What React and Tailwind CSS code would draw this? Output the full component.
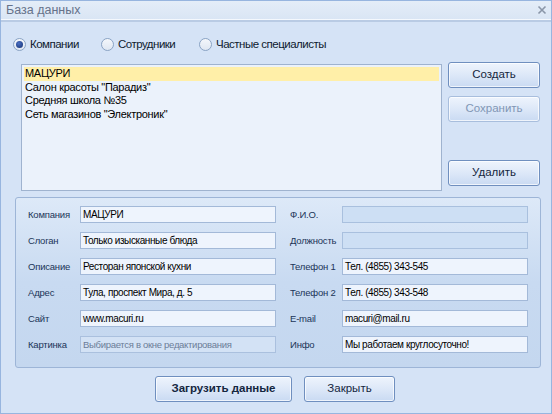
import React from "react";

const F = { fontFamily: '"Liberation Sans", Arial, sans-serif' };

function Radio({ label, checked, w }) {
  return (
    <div className="flex items-center gap-[4px]" style={{ width: w }}>
      <div className="w-[13px] h-[13px] rounded-full border border-[#8aa3c4] bg-gradient-to-b from-[#f4f7fb] to-[#dfe7f2] flex items-center justify-center">
        {checked && (
          <div className="w-[7px] h-[7px] rounded-full bg-[radial-gradient(circle_at_40%_35%,#4a6fc4,#14306f)]" />
        )}
      </div>
      <span className="text-[11.5px] tracking-[-0.5px] text-[#0e1a2e] leading-[14px]">{label}</span>
    </div>
  );
}

function Btn({ children, disabled, className = "", bold }) {
  return (
    <div
      className={`h-[26px] rounded-[3px] border flex items-center justify-center bg-gradient-to-b from-[#eef4fd] via-[#dde8f8] to-[#c9daf2] shadow-[inset_0_0_0_1px_rgba(255,255,255,0.7)] ${
        disabled ? "border-[#a8bedd] text-[#8196b5]" : "border-[#6f8fbf] text-[#142640]"
      } ${bold ? "text-[11.5px] font-bold" : "text-[11.5px]"} ${className}`}
    >
      {children}
    </div>
  );
}

function Label({ children, right }) {
  return (
    <div className={`text-[9.5px] tracking-[-0.2px] text-[#1b3558] leading-[17px] whitespace-nowrap ${right ? "pl-[14px]" : ""}`}>
      {children}
    </div>
  );
}

function Input({ value, kind }) {
  let box = "bg-[#eef4fd] border-[#a3b9d8] text-[#000] text-[10px] tracking-[-0.4px]";
  if (kind === "off") box = "bg-[#cddff4] border-[#a9c0de]";
  if (kind === "ph") box = "bg-[#d3e2f5] border-[#aac0de] text-[#6b7d98] text-[9.5px] tracking-[-0.3px]";
  return (
    <div className={`h-[17px] border ${box} leading-[15px] px-[2px] whitespace-nowrap overflow-hidden`}>
      {value}
    </div>
  );
}

export default function App() {
  const items = ['МАЦУРИ', 'Салон красоты "Парадиз"', 'Средняя школа №35', 'Сеть магазинов "Электроник"'];
  return (
    <div style={F} className="w-[552px] h-[414px] border border-[#97b5df] bg-[#d5e3f6] flex flex-col overflow-hidden">
      {/* Title bar */}
      <div className="h-[21px] shrink-0 flex items-center justify-between bg-gradient-to-b from-[#e4edf8] to-[#d9e5f4] border-b-[2px] border-[#b9cbe4] shadow-[0_-1px_0_#f4f8fd_inset]">
        <span className="pl-[5px] text-[12.5px] text-[#66728a]">База данных</span>
        <svg width="10" height="10" viewBox="0 0 10 10" className="mr-[4px] -mt-[1px]">
          <path d="M1.5 1.5 L8.5 8.5 M8.5 1.5 L1.5 8.5" stroke="#8a96a8" strokeWidth="1.6" />
        </svg>
      </div>

      {/* Radios */}
      <div className="flex pl-[12px] pt-[15px]">
        <Radio label="Компании" checked w={88} />
        <Radio label="Сотрудники" w={98} />
        <Radio label="Частные специалисты" w={150} />
      </div>

      {/* List + buttons */}
      <div className="flex items-start mt-[13px] pl-[20px]">
        <div className="w-[421px] h-[127px] border border-[#9fb3cf] bg-[#ebf2fb] pt-[2px] px-[2px]">
          {items.map((t, i) => (
            <div
              key={t}
              className={`h-[13.5px] text-[11px] tracking-[-0.3px] leading-[13.5px] text-black pl-[1px] ${i === 0 ? "bg-[#ffefa8]" : ""}`}
            >
              {t}
            </div>
          ))}
        </div>
        <div className="ml-[6px] -mt-[2px] w-[92px] flex flex-col">
          <Btn>Создать</Btn>
          <Btn disabled className="mt-[8px]">Сохранить</Btn>
          <Btn className="mt-[38px]">Удалить</Btn>
        </div>
      </div>

      {/* Fields panel */}
      <div className="mt-[6px] ml-[14px] w-[526px] h-[171px] rounded-[3px] border border-[#9db5d7] bg-gradient-to-b from-[#dde9f8] via-[#c8daf1] to-[#c4d7ef] pl-[12px] pt-[8px]">
        <div className="grid grid-cols-[52px_196px_66px_186px] gap-y-[9px]">
          <Label>Компания</Label>
          <Input value="МАЦУРИ" />
          <Label right>Ф.И.О.</Label>
          <Input kind="off" />

          <Label>Слоган</Label>
          <Input value="Только изысканные блюда" />
          <Label right>Должность</Label>
          <Input kind="off" />

          <Label>Описание</Label>
          <Input value="Ресторан японской кухни" />
          <Label right>Телефон 1</Label>
          <Input value="Тел. (4855) 343-545" />

          <Label>Адрес</Label>
          <Input value="Тула, проспект Мира, д. 5" />
          <Label right>Телефон 2</Label>
          <Input value="Тел. (4855) 343-548" />

          <Label>Сайт</Label>
          <Input value="www.macuri.ru" />
          <Label right>E-mail</Label>
          <Input value="macuri@mail.ru" />

          <Label>Картинка</Label>
          <Input value="Выбирается в окне редактирования" kind="ph" />
          <Label right>Инфо</Label>
          <Input value="Мы работаем круглосуточно!" />
        </div>
      </div>

      {/* Bottom buttons */}
      <div className="flex justify-center gap-[12px] mt-[8px] pr-[2px]">
        <Btn bold className="w-[137px]">Загрузить данные</Btn>
        <Btn className="w-[91px]">Закрыть</Btn>
      </div>
    </div>
  );
}
